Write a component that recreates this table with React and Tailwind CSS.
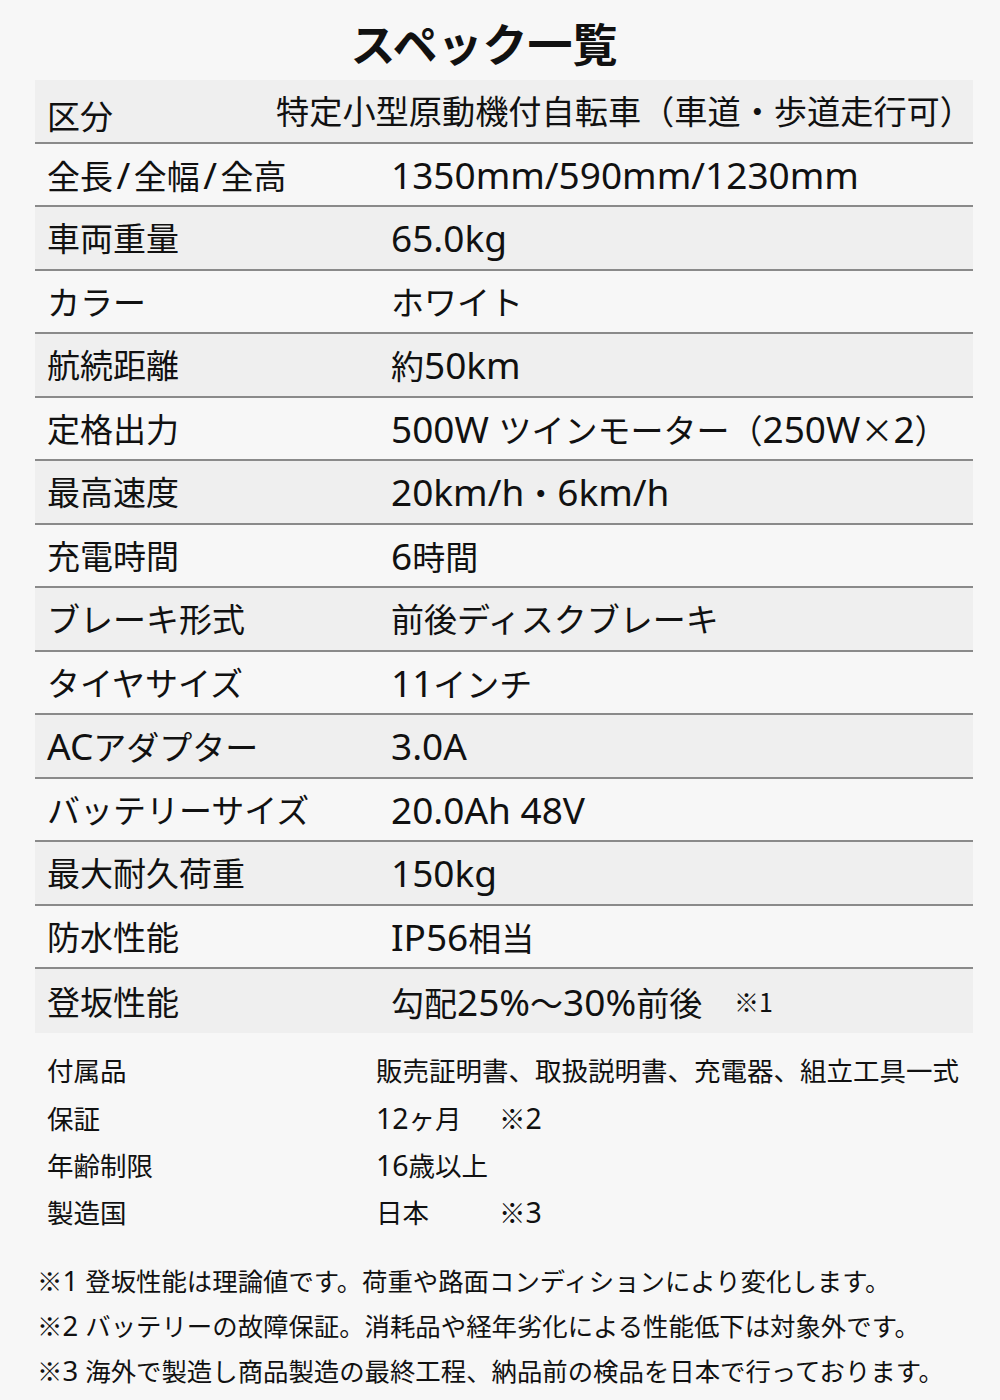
import React from 'react';

// Latin runs are set a little larger than the CJK runs, as in the original artwork
const Mixed = ({ text, latin, cjk }) =>
  text
    .split(/([\x20-\x7E]+)/)
    .filter(Boolean)
    .map((part, i) =>
      /^[\x20-\x7E]+$/.test(part) ? (
        <span key={i} className={latin}>{part}</span>
      ) : (
        <span key={i} className={cjk}>{part}</span>
      )
    );

const L33 = "text-[37px] font-['Noto_Sans',sans-serif]";
const C33 = "text-[33px] font-['Noto_Sans_CJK_JP',sans-serif]";
const L26 = "text-[28.5px] font-['Noto_Sans',sans-serif]";
const C26 = "text-[26.5px] font-['Noto_Sans_CJK_JP',sans-serif]";
const L25 = "text-[27.5px] font-['Noto_Sans',sans-serif]";
const C25 = "text-[25.4px] font-['Noto_Sans_CJK_JP',sans-serif]";

const Slash = () => <span className={`px-[3.5px] ${L33}`}>/</span>;

const specs = [
  [
    <>
      <span className={C33}>全長</span>
      <Slash />
      <span className={C33}>全幅</span>
      <Slash />
      <span className={C33}>全高</span>
    </>,
    '1350mm/590mm/1230mm',
  ],
  ['車両重量', '65.0kg'],
  ['カラー', 'ホワイト'],
  ['航続距離', '約50km'],
  ['定格出力', '500W ツインモーター（250W×2）'],
  ['最高速度', '20km/h・6km/h'],
  ['充電時間', '6時間'],
  ['ブレーキ形式', '前後ディスクブレーキ'],
  ['タイヤサイズ', '11インチ'],
  ['ACアダプター', '3.0A'],
  ['バッテリーサイズ', '20.0Ah 48V'],
  ['最大耐久荷重', '150kg'],
  ['防水性能', 'IP56相当'],
];

const extras = [
  ['付属品', '販売証明書、取扱説明書、充電器、組立工具一式', ''],
  ['保証', '12ヶ月', '※2'],
  ['年齢制限', '16歳以上', ''],
  ['製造国', '日本', '※3'],
];

const notes = [
  '※1 登坂性能は理論値です。荷重や路面コンディションにより変化します。',
  '※2 バッテリーの故障保証。消耗品や経年劣化による性能低下は対象外です。',
  '※3 海外で製造し商品製造の最終工程、納品前の検品を日本で行っております。',
];

export default function App() {
  return (
    <div className="w-[1000px] h-[1400px] bg-[#f7f7f7] text-[#111] font-['Noto_Sans_CJK_JP',sans-serif]">
      {/* Title */}
      <h1 className="h-[80px] pt-[4px] pr-[32px] flex items-center justify-center text-[45px] font-bold leading-none">
        スペック一覧
      </h1>

      {/* Spec table */}
      <div className="ml-[35px] w-[938px]">
        <div className="h-[63.5px] flex items-center border-b-2 border-[#8a8a8a] bg-[#efefef] text-[33px] leading-none">
          <span className="pl-[12px] pt-[10px] w-[249px]">区分</span>
          <span className="whitespace-nowrap pb-[2px] text-[33.2px]">
            特定小型原動機付自転車（車道・歩道走行可）
          </span>
        </div>
        {specs.map(([label, value], i) => (
          <div
            key={value}
            className={`h-[63.5px] flex items-center border-b-2 border-[#8a8a8a] leading-none ${
              i % 2 === 1 ? 'bg-[#efefef]' : 'bg-[#f7f7f7]'
            }`}
          >
            <span className="pl-[12px] w-[356px] whitespace-nowrap">
              {typeof label === 'string' ? <Mixed text={label} latin={L33} cjk={C33} /> : label}
            </span>
            <span className="whitespace-nowrap">
              <Mixed text={value} latin={L33} cjk={C33} />
            </span>
          </div>
        ))}
        <div className="h-[64px] flex items-center bg-[#efefef] leading-none">
          <span className={`pl-[12px] w-[356px] ${C33}`}>登坂性能</span>
          <span className="w-[343px] whitespace-nowrap">
            <Mixed text="勾配25%〜30%前後" latin={L33} cjk={C33} />
          </span>
          <span className="text-[25px]">※1</span>
        </div>
      </div>

      {/* Extra info */}
      <div className="ml-[47px] mt-[14px] flex flex-col leading-none">
        {extras.map(([label, value, note]) => (
          <div key={label} className="h-[47.3px] flex items-center">
            <span className={`w-[329px] ${C26}`}>{label}</span>
            <span className={note ? 'w-[123px] whitespace-nowrap' : 'whitespace-nowrap'}>
              <Mixed text={value} latin={L26} cjk={C26} />
            </span>
            {note && (
              <span className="whitespace-nowrap">
                <Mixed text={note} latin={L26} cjk={C26} />
              </span>
            )}
          </div>
        ))}
      </div>

      {/* Footnotes */}
      <div className="ml-[37px] mt-[22px] flex flex-col leading-none">
        {notes.map((n) => (
          <div key={n} className="h-[45px] flex items-center whitespace-nowrap">
            <span>
              <Mixed text={n} latin={L25} cjk={C25} />
            </span>
          </div>
        ))}
      </div>
    </div>
  );
}
